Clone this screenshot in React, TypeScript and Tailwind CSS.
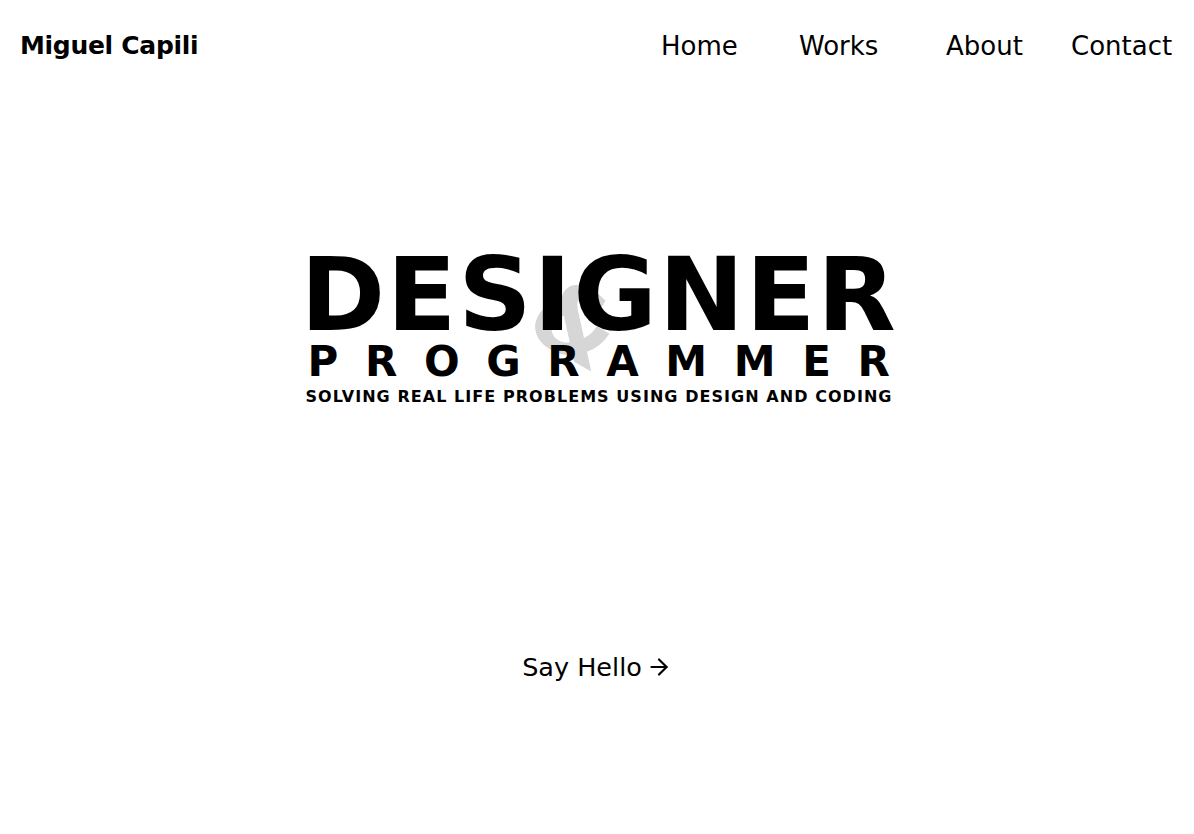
import { ArrowRight } from 'lucide-react';

const font = { fontFamily: '"DejaVu Sans", "Liberation Sans", sans-serif' };

export default function App() {
  return (
    <div className="min-h-[834px] bg-white text-black" style={font}>
      <header className="flex h-[92px] items-center justify-between pl-5 pr-5">
        <a className="text-[25px] font-bold tracking-[-0.3px]">Miguel Capili</a>
        <nav className="flex items-center whitespace-nowrap text-[26px]">
          <a className="w-[138px]">Home</a>
          <a className="w-[147px]">Works</a>
          <a className="w-[125px]">About</a>
          <a className="w-[103px]">Contact</a>
        </nav>
      </header>

      <section className="flex flex-col items-center pt-[152px]">
        <div className="relative ml-[4px] flex flex-col items-center">
          <span className="absolute left-1/2 top-[32px] ml-[-24px] -translate-x-1/2 rotate-[30deg] text-[96px] font-bold leading-none text-[#d6d6d6]">
            &amp;
          </span>
          <h1 className="relative text-[102px] font-bold leading-none tracking-[1.75px]">DESIGNER</h1>
          <div className="relative mr-[-26px] mt-[-5px] text-[42px] font-bold leading-none tracking-[26.6px]">
            PROGRAMMER
          </div>
          <p className="relative mt-[2px] text-[16px] font-bold tracking-[1.05px]">
            SOLVING REAL LIFE PROBLEMS USING DESIGN AND CODING
          </p>
        </div>
      </section>

      <div className="mt-[239px] flex items-center justify-center gap-1 text-[25.5px]">
        <span>Say Hello</span>
        <ArrowRight className="h-[26px] w-[26px]" strokeWidth={2} />
      </div>
    </div>
  );
}
